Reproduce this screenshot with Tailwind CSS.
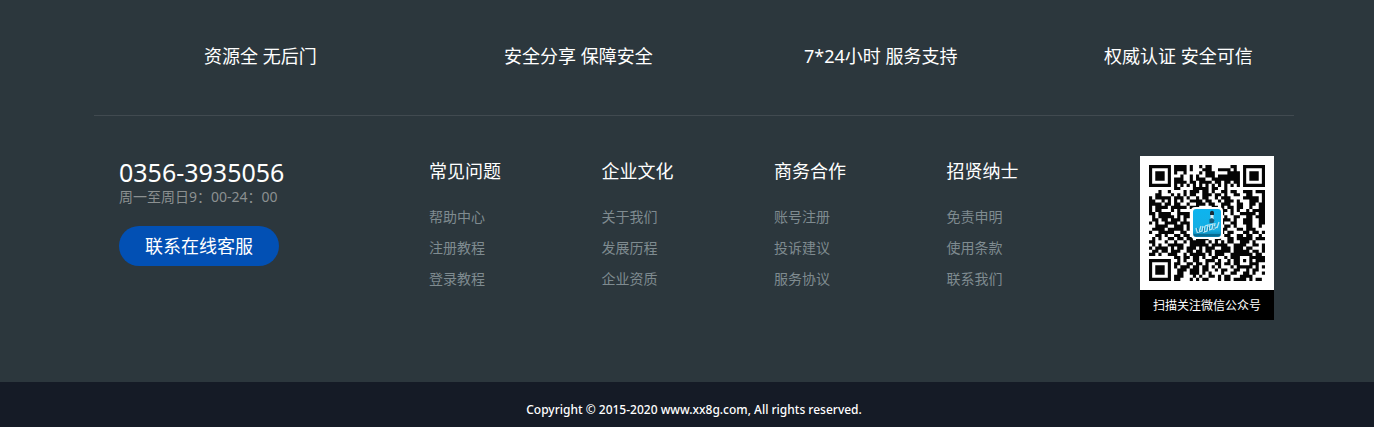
<!DOCTYPE html>
<html lang="zh-CN">
<head>
    <meta charset="UTF-8">
    <meta name="viewport" content="width=device-width, initial-scale=1.0">
    <title>联系我们</title>
    <script src="https://cdn.jsdelivr.net/npm/@tailwindcss/browser@4"></script>
    <style>
        body {
            font-family: 'Noto Sans', 'Noto Sans CJK SC', sans-serif;
        }
    </style>
</head>
<body class="min-h-screen bg-[#151b26] text-white">
    <footer>
        <div class="bg-[#2c373d] pl-[14px]">
            <div class="mx-auto max-w-[1200px]">
                <ul class="grid grid-cols-4 border-b border-[#414a50] pt-[42px] pb-[45px] text-[18px] leading-[28px]">
                    <li class="pl-[110px]">资源全 无后门</li>
                    <li class="pl-[110px]">安全分享 保障安全</li>
                    <li class="pl-[110px]">7*24小时 服务支持</li>
                    <li class="pl-[110px]">权威认证 安全可信</li>
                </ul>

                <div class="flex pt-[40px] pr-[20px] pb-[62px] pl-[25px]">
                    <div class="w-[310px]">
                        <p class="text-[25px] leading-[32px]">0356-3935056</p>
                        <p class="text-[14px] leading-[18px] text-[#8b9091]">周一至周日9：00-24：00</p>
                        <button type="button" class="mt-[20px] h-[40px] w-[160px] rounded-full bg-[#0250b4] text-[18px] leading-[40px]">联系在线客服</button>
                    </div>

                    <nav class="grid max-w-[690px] flex-1 grid-cols-4">
                        <div>
                            <h3 class="mb-[15px] text-[18px] leading-[30px]">常见问题</h3>
                            <ul class="text-[14px] leading-[31px] text-[#7f8b90]">
                                <li><a href="#">帮助中心</a></li>
                                <li><a href="#">注册教程</a></li>
                                <li><a href="#">登录教程</a></li>
                            </ul>
                        </div>
                        <div>
                            <h3 class="mb-[15px] text-[18px] leading-[30px]">企业文化</h3>
                            <ul class="text-[14px] leading-[31px] text-[#7f8b90]">
                                <li><a href="#">关于我们</a></li>
                                <li><a href="#">发展历程</a></li>
                                <li><a href="#">企业资质</a></li>
                            </ul>
                        </div>
                        <div>
                            <h3 class="mb-[15px] text-[18px] leading-[30px]">商务合作</h3>
                            <ul class="text-[14px] leading-[31px] text-[#7f8b90]">
                                <li><a href="#">账号注册</a></li>
                                <li><a href="#">投诉建议</a></li>
                                <li><a href="#">服务协议</a></li>
                            </ul>
                        </div>
                        <div>
                            <h3 class="mb-[15px] text-[18px] leading-[30px]">招贤纳士</h3>
                            <ul class="text-[14px] leading-[31px] text-[#7f8b90]">
                                <li><a href="#">免责申明</a></li>
                                <li><a href="#">使用条款</a></li>
                                <li><a href="#">联系我们</a></li>
                            </ul>
                        </div>
                    </nav>

                    <figure class="ml-auto w-[134px] bg-black">
                        <svg class="block w-full" viewBox="0 0 134 134" role="img" aria-label="微信公众号二维码">
                            <defs>
                                <linearGradient id="badge" x1="0" y1="0" x2="0" y2="1">
                                    <stop offset="0" stop-color="#0db4ef"/>
                                    <stop offset="0.75" stop-color="#16aee2"/>
                                    <stop offset="1" stop-color="#087ba8"/>
                                </linearGradient>
                            </defs>
                            <rect width="134" height="134" fill="#fff"/>
                            <path id="qr" transform="translate(9 9) scale(3.135)" fill="#050505"/>
                            <rect x="51" y="51" width="32" height="32" rx="4" fill="#fff"/>
                            <rect x="53" y="53" width="28" height="28" rx="3" fill="url(#badge)"/>
                            <path d="M54 79h26" stroke="#076b91" stroke-width="2"/>
                            <path d="M70 57c0-3 4-3 4 0v2h-4z" fill="#172b38"/>
                            <path d="M70.500 59h3v4h-3z" fill="#d6eef5"/>
                            <path d="M69.500 63l2.500-1 2.500 2-1 3h-4z" fill="#185c7c"/>
                            <path d="M56 72l1.500 5M61 70l-2 6 3-1 1-5M65 70l-1 6 3-1 1-6-3 1M70 68l-1 6 3-1 1-5-3 1M75 67l-1 6 3-2M79 66l-2 6" fill="none" stroke="#b5e4f2" stroke-width="1.300"/>
                            <path d="M57.500 72l1 4M63.500 72v4M68.500 71v4M74 70v3" stroke="#1a7da5" stroke-width="1"/>
                        </svg>
                        <figcaption class="pt-[2px] text-center text-[12px] leading-[28px]">扫描关注微信公众号</figcaption>
                    </figure>
                </div>
            </div>
        </div>
        <p class="pt-[18px] pb-[7px] pl-[14px] text-center text-[12px] leading-[20px] font-medium">Copyright © 2015-2020 www.xx8g.com, All rights reserved.</p>
    </footer>

    <script>
        // one string per row of modules, X is dark
        const rows = [
            'XXXXXXX.XXXX.X..X.XX......XX..XXXXXXX',
            'X.....X.XXXX.X...XXX..XXXX.X..X.....X',
            'X.XXX.X.X..X....X.XXX....XXXX.X.XXX.X',
            'X.XXX.X...X..X.X..XXX.XXXXXXX.X.XXX.X',
            'X.XXX.X.XXX..X.XXX..XXXXXXXXX.X.XXX.X',
            'X.....X.XXXX.XX.XXXX.XX.XX.XX.X.....X',
            'XXXXXXX.X.X.X.X.X.X.X.X.X.X.X.XXXXXXX',
            '........XX....XXXXX.XX..X............',
            '...X..X....X.XXX.XX.X..XX.XX..XXX.XXX',
            '..XX...X.X.X.XX..XXX.XX.X..XX..XX...X',
            'X.XXXXX.XXX.X..X.XX..X.XXX....XXXXX.X',
            'XX..X.X.X.X..XXXX.XX..X.XXX.X...XXX.X',
            'XXXX.XX.XX..X..XXX.XX..XXX..XX..XX.XX',
            'X.XXXX.XXXXX.XXX....XX.X.XX.XX..X..XX',
            'X.XX...X.X.............XX.X.X..X.XXXX',
            'XX.XXXX..XXXX..........X..X..XXXXX.XX',
            '.X.XXXXX.X.XX...........X..XX..XX.XXX',
            '.XX.XX.XXX.X...........XXX.X..XXX..XX',
            'X.X..XXXX.XXX..........X..XX..XXX..XX',
            '..XXXX..XXX.X...........XX.X...XX..X.',
            '.XXXX.XXXXX.X..........XX...XX.XXX...',
            'X..XXXXX..XX...........X.XX...XX.XX.X',
            '..XX.X..XX.XX...........XX..XX.XX..X.',
            '.X.X..XX.XX.XX.XXXX..XX..XX.XXXXX.XXX',
            'XX...X..X..X.XXXXX.X.X.X.XX..XXX.X...',
            '.X.X..XXXXX..XXXXXX.XXXXX..XXXX..XX.X',
            'X.XXXX.X.XX.XXX.X.XXX..XXX.XXX.XX...X',
            '.XX.XX.XXX..XX.XX.XX.XXXXX.XXXXX.XX.X',
            'XX.X..XXX..X.XXXXX.X.XXX..XXXXXXX.XX.',
            '........XX.XX.XX.X..XX..X.XXX...XXXXX',
            'XXXXXXX..X.X..XX..XXX.X..X.XX.X.X.XXX',
            'X.....X.XX..XX.XX.X..XX.XX.XX...XXX..',
            'X.XXX.X.X.XXX.XX.XX.X.X...X.XXXXX.X.X',
            'X.XXX.X..XXX.XXX.XX..X.XX..XX..X.XX..',
            'X.XXX.X..XX..XXX.X.X...X..XX..XX.X..X',
            'X.....X.XXX...X.X..XX.X.XX...XXXX....',
            'XXXXXXX.XX...X.X.XX...X.XX.XXXX.X.XX.'
        ];
        let d = '';
        rows.forEach((row, y) => {
            for (const run of row.matchAll(/X+/g)) {
                d += `M${run.index} ${y}h${run[0].length}v1h-${run[0].length}z`;
            }
        });
        document.getElementById('qr').setAttribute('d', d);
    </script>
</body>
</html>
